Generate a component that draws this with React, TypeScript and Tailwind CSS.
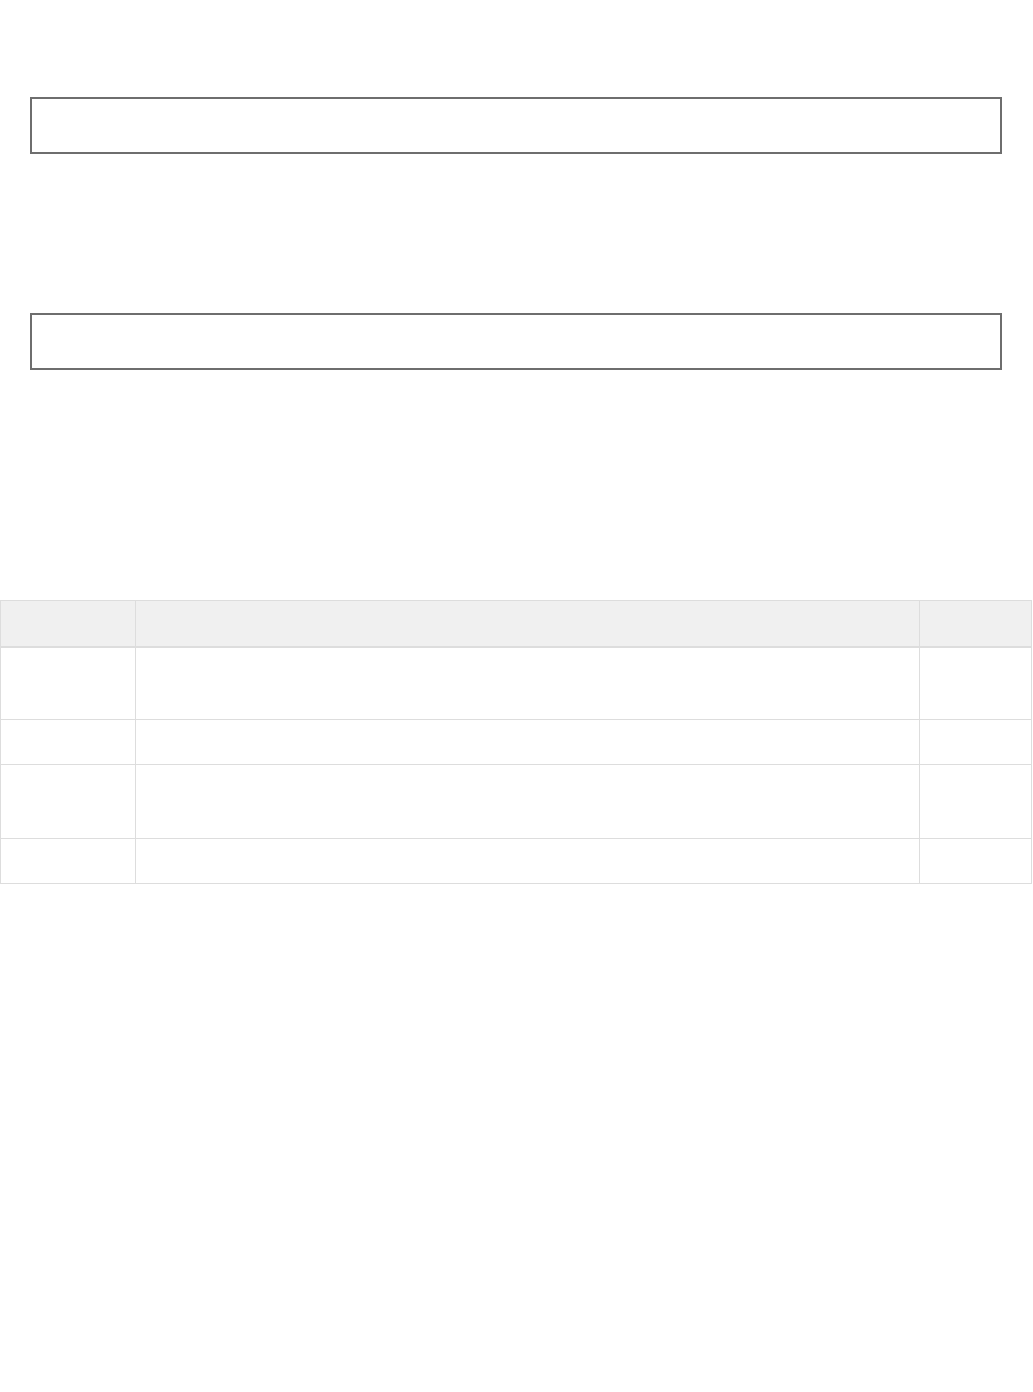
const rows = [73, 45, 74, 45]

function Field() {
  return <div className="ml-[30px] h-[57px] w-[972px] border-2 border-[#6e6e6e] bg-white" />
}

export default function App() {
  return (
    <div className="min-h-[1392px] w-[1033px] bg-white font-['Liberation_Sans',sans-serif] text-[#333]">
      <div className="pt-[97px]">
        <Field />
      </div>
      <div className="pt-[159px]">
        <Field />
      </div>
      <div className="pt-[230px]">
        <table className="w-[1031px] table-fixed border-collapse border border-[#dddddd]">
          <colgroup>
            <col className="w-[135px]" />
            <col className="w-[784px]" />
            <col className="w-[112px]" />
          </colgroup>
          <thead>
            <tr className="h-[46px] bg-[#f0f0f0]">
              <th className="border border-b-2 border-[#dddddd]" />
              <th className="border border-b-2 border-[#dddddd]" />
              <th className="border border-b-2 border-[#dddddd]" />
            </tr>
          </thead>
          <tbody>
            {rows.map((h, i) => (
              <tr key={i} style={{ height: h }}>
                <td className="border border-[#dddddd]" />
                <td className="border border-[#dddddd]" />
                <td className="border border-[#dddddd]" />
              </tr>
            ))}
          </tbody>
        </table>
      </div>
    </div>
  )
}
